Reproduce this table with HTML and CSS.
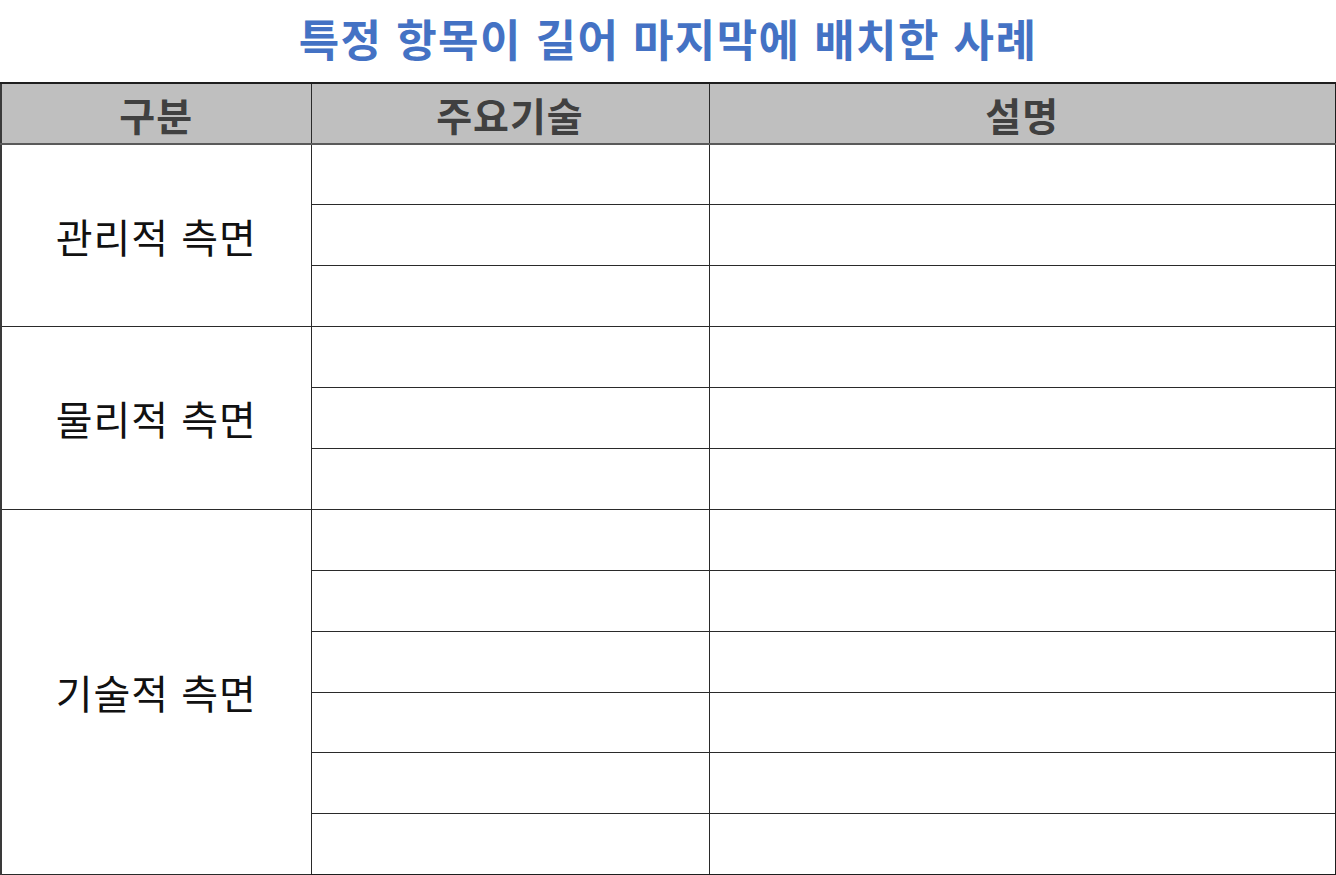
FILE: index.html
```html
<!DOCTYPE html>
<html lang="ko">
<head>
<meta charset="utf-8">
<link rel="stylesheet" href="styles.css">
</head>
<body>
<div class="page">
  <h1 class="title">특정 항목이 길어 마지막에 배치한 사례</h1>
  <table class="grid">
    <colgroup>
      <col class="c1"><col class="c2"><col class="c3">
    </colgroup>
    <thead>
      <tr><th>구분</th><th>주요기술</th><th>설명</th></tr>
    </thead>
    <tbody>
      <tr><td class="cat" rowspan="3">관리적 측면</td><td></td><td></td></tr>
      <tr><td></td><td></td></tr>
      <tr><td></td><td></td></tr>
      <tr><td class="cat" rowspan="3">물리적 측면</td><td></td><td></td></tr>
      <tr><td></td><td></td></tr>
      <tr><td></td><td></td></tr>
      <tr><td class="cat" rowspan="6">기술적 측면</td><td></td><td></td></tr>
      <tr><td></td><td></td></tr>
      <tr><td></td><td></td></tr>
      <tr><td></td><td></td></tr>
      <tr><td></td><td></td></tr>
      <tr><td></td><td></td></tr>
    </tbody>
  </table>
</div>
</body>
</html>
```
FILE: styles.css
```css
html, body {
  margin: 0;
  padding: 0;
  background: #ffffff;
  overflow: hidden;
}
.page {
  width: 1336px;
  font-family: "Noto Sans CJK KR", "Noto Sans", sans-serif;
}
.title {
  margin: 0;
  height: 82px;
  display: flex;
  align-items: center;
  justify-content: center;
  color: #4472c4;
  font-size: 44px;
  font-weight: 700;
  letter-spacing: 1.4px;
  line-height: 1;
  padding-bottom: 6px;
  box-sizing: border-box;
}
.grid {
  width: 1335px;
  border-collapse: collapse;
  table-layout: fixed;
}
.c1 { width: 310px; }
.c2 { width: 398px; }
.c3 { width: 627px; }
.grid th, .grid td {
  border: 1px solid #2a2a2a;
  height: 60.9px;
  padding: 0;
  box-sizing: border-box;
  text-align: center;
  vertical-align: middle;
}
.grid thead th {
  height: 61px;
  background: #bfbfbf;
  color: #404040;
  font-size: 39px;
  font-weight: 700;
  letter-spacing: 1px;
  border-top: 2px solid #1e1e1e;
  border-bottom: 2px solid #5a5a5a;
}
.grid td.cat {
  font-size: 40px;
  font-weight: 400;
  color: #111111;
  letter-spacing: 1px;
}
.grid th:first-child, .grid td.cat {
  border-left: 2px solid #3a3a3a;
}
.grid th:last-child, .grid td:last-child {
  border-right: 2px solid #1e1e1e;
}
.grid tbody tr:last-child td {
  border-bottom: 2px solid #1e1e1e;
}
```
